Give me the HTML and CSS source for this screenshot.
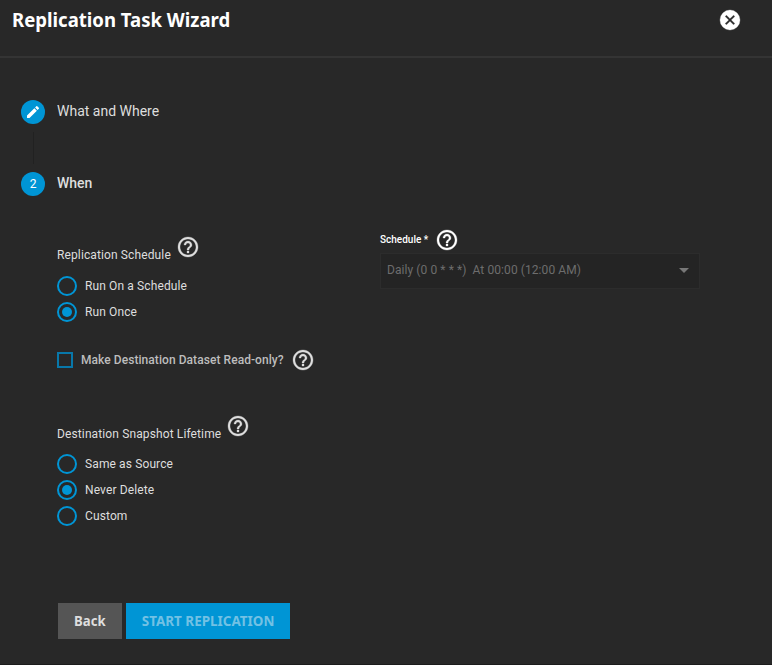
FILE: index.html
```html
<!DOCTYPE html>
<html lang="en">
<head>
<meta charset="utf-8">
<title>Replication Task Wizard</title>
<link rel="stylesheet" href="styles.css">
</head>
<body>
<svg width="0" height="0" class="defs" aria-hidden="true">
  <symbol id="help" viewBox="0 0 24 24"><path d="M11 18h2v-2h-2v2zm1-16C6.480 2 2 6.480 2 12s4.480 10 10 10 10-4.480 10-10S17.520 2 12 2zm0 18c-4.410 0-8-3.590-8-8s3.590-8 8-8 8 3.590 8 8-3.590 8-8 8zm0-14c-2.210 0-4 1.790-4 4h2c0-1.100.9-2 2-2s2 .9 2 2c0 2-3 1.750-3 5h2c0-2.250 3-2.500 3-5 0-2.210-1.790-4-4-4z"/></symbol>
</svg>
<div class="wizard">
  <header class="header">
    <h1 class="title"><span>Replication Task Wizard</span></h1>
    <button class="close" aria-label="Close"><svg viewBox="0 0 24 24"><path d="M12 2a10 10 0 1 0 0 20 10 10 0 0 0 0-20zm5 13.590L15.590 17 12 13.410 8.410 17 7 15.590 10.590 12 7 8.410 8.410 7 12 10.590 15.590 7 17 8.410 13.410 12z"/></svg></button>
  </header>
  <div class="step">
    <span class="badge"><svg viewBox="0 0 24 24"><path d="M3 17.250V21h3.750L17.810 9.940l-3.750-3.750L3 17.250zM20.710 7.040a1 1 0 0 0 0-1.410l-2.340-2.340a1 1 0 0 0-1.410 0l-1.830 1.830 3.750 3.750 1.830-1.830z"/></svg></span>
    <span class="step-label">What and Where</span>
  </div>
  <div class="connector"></div>
  <div class="step">
    <span class="badge">2</span>
    <span class="step-label active">When</span>
  </div>
  <main class="form">
    <section class="column">
      <div class="legend"><span class="name">Replication Schedule</span><svg class="help"><use href="#help"/></svg></div>
      <div class="option"><i class="radio"></i><span>Run On a Schedule</span></div>
      <div class="option"><i class="radio on"></i><span>Run Once</span></div>
      <div class="check"><i class="box"></i><span>Make Destination Dataset Read-only?</span><svg class="help"><use href="#help"/></svg></div>
      <div class="legend lifetime"><span class="name">Destination Snapshot Lifetime</span><svg class="help"><use href="#help"/></svg></div>
      <div class="option"><i class="radio"></i><span>Same as Source</span></div>
      <div class="option"><i class="radio on"></i><span>Never Delete</span></div>
      <div class="option"><i class="radio"></i><span>Custom</span></div>
    </section>
    <section class="column schedule">
      <div class="field-label"><span>Schedule *</span><svg class="help"><use href="#help"/></svg></div>
      <div class="select"><span>Daily (0 0 * * *)&nbsp; At 00:00 (12:00 AM)</span><i class="arrow"></i></div>
    </section>
  </main>
  <footer class="actions">
    <button class="btn back"><span>Back</span></button>
    <button class="btn start"><span>START REPLICATION</span></button>
  </footer>
</div>
</body>
</html>
```
FILE: styles.css
```css
* { box-sizing: border-box; }
body { margin: 0; background: #282828; color: #dedede; font: 500 12px/16px Roboto, sans-serif; }
svg { fill: currentColor; }
.defs { display: none; }
.wizard { height: 665px; border-bottom: 1px solid #1c1c1c; }
.header { display: flex; justify-content: space-between; height: 58px; border-bottom: 2px solid #343434; padding: 8px 30px 0 12px; }
.title { margin: 0; color: #fff; font: 700 20px/24px "Noto Sans", sans-serif; white-space: nowrap; }
.title span { display: inline-block; transform: scaleX(.928); transform-origin: left; }
.close { width: 24px; height: 24px; padding: 0; border: 0; background: none; color: #fff; }
.close svg { display: block; width: 24px; height: 24px; stroke: currentColor; stroke-width: .3; }
.step { display: flex; align-items: center; height: 24px; padding-left: 21px; gap: 12px; }
.header + .step { margin-top: 42px; }
.badge { display: flex; align-items: center; justify-content: center; width: 24px; height: 24px; border-radius: 50%; background: #0095d5; color: #fff; font-size: 12px; font-weight: 400; }
.badge svg { width: 16px; height: 16px; }
.step-label { font-size: 14px; font-weight: 400; margin-top: -2px; }
.active { font-weight: 500; }
.connector { width: 1px; height: 32px; margin: 8px 0 8px 33px; background: #212121; }
.form { display: flex; padding: 39px 0 0 57px; height: 407px; }
.column { width: 323px; }
.legend { display: flex; gap: 5px; height: 38px; }
.lifetime { height: 37px; }
.name { font-weight: 400; margin-top: 12px; letter-spacing: .12px; }
.help { width: 24px; height: 24px; flex: none; stroke: currentColor; stroke-width: .3; }
.option { display: flex; align-items: center; gap: 8px; height: 26px; font-weight: 400; letter-spacing: .12px; }
.radio { display: flex; align-items: center; justify-content: center; width: 20px; height: 20px; border: 2px solid #0095d5; border-radius: 50%; }
.radio.on::after { content: ""; width: 10px; height: 10px; border-radius: 50%; background: #0095d5; }
.check { display: flex; align-items: center; height: 24px; margin: 23px 0 42px; color: #bdbdbd; letter-spacing: .06px; }
.box { width: 16px; height: 16px; margin-right: 8px; border: 2px solid #0878aa; }
.check .help { margin-left: 7px; color: #dedede; }
.schedule { width: 320px; margin-top: -7px; color: #fff; }
.field-label { display: flex; align-items: center; gap: 7px; height: 24px; font-size: 10px; }
.select { display: flex; align-items: center; justify-content: space-between; height: 36px; margin-top: 1px; padding: 0 10px 2px 6px; border: 1px solid #2c2c2c; background: #242424; color: #6d6d6d; font-weight: 400; letter-spacing: .08px; }
.arrow { border: 5px solid transparent; border-top-color: #777; border-bottom: 0; }
.actions { display: flex; gap: 4px; padding-left: 58px; }
.btn { height: 36px; padding: 0; border: 0; font: 700 14px/36px "Noto Sans", sans-serif; white-space: nowrap; }
.btn span { display: inline-block; }
.back { width: 64px; background: #555; color: #dedede; }
.back span { transform: scaleX(.94); }
.start { width: 164px; background: #0095d5; color: #72c1e4; }
.start span { transform: scaleX(.96); }
```
